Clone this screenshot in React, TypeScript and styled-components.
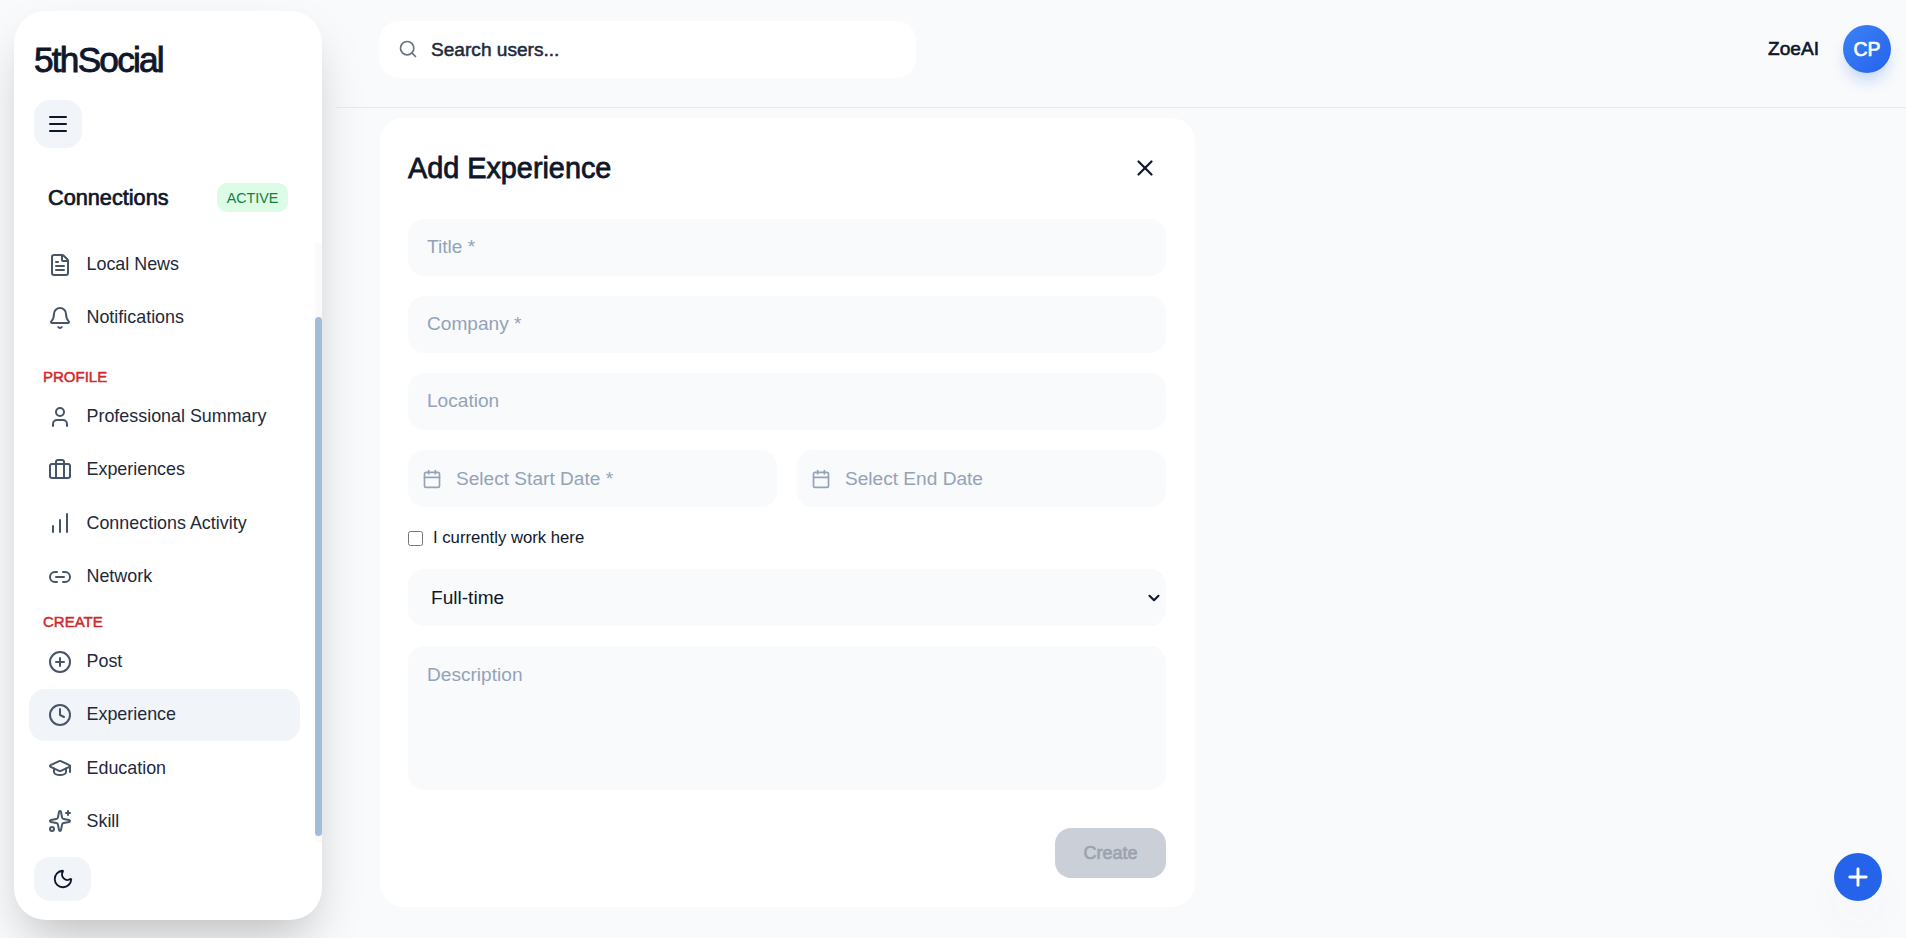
import * as React from 'react';
import styled, { createGlobalStyle } from 'styled-components';
import {
  Bell,
  Briefcase,
  Calendar,
  ChartNoAxesColumnIncreasing,
  ChevronDown,
  CirclePlus,
  Clock,
  FileText,
  GraduationCap,
  Link2,
  LucideIcon,
  Menu,
  Moon,
  Plus,
  Search,
  Sparkles,
  User,
  X,
} from 'lucide-react';

const GlobalStyle = createGlobalStyle`
  * {
    box-sizing: border-box;
  }
  html, body {
    margin: 0;
    padding: 0;
    height: 100%;
    overflow: hidden;
    background: #f8fafc;
    font-family: "Liberation Sans", Arial, sans-serif;
  }
`;

// the headings are a thickened regular cut, real bold runs too wide
const heavy = (w: number) => `
  font-weight: 400;
  -webkit-text-stroke: ${w}px currentColor;
`;

const Page = styled.div`
  display: flex;
  width: 1906px;
  height: 938px;
  background: #f9fafb;
`;

const SidebarSlot = styled.div`
  flex: 0 0 336px;
  padding: 11px 14px 18px;
`;

const Sidebar = styled.aside`
  display: flex;
  flex-direction: column;
  height: 909px;
  padding-top: 30px;
  background: #fff;
  border-radius: 32px;
  box-shadow: 0 25px 50px -12px rgba(0, 0, 0, 0.25);
  overflow: hidden;
`;

const Brand = styled.div`
  height: 36px;
  padding-left: 20px;
  font-size: 35.2px;
  line-height: 37px;
  ${heavy(0.9)}
  letter-spacing: -0.05em;
  color: #0f172a;
`;

const SquareButton = styled.button`
  display: flex;
  align-items: center;
  justify-content: center;
  width: 48px;
  height: 48px;
  margin: 23px 0 0 20px;
  padding: 0;
  border: none;
  border-radius: 16px;
  background: #f1f5f9;
  color: #0f172a;
`;

const ActivityRow = styled.div`
  display: flex;
  align-items: center;
  justify-content: space-between;
  height: 29px;
  margin: 35px 34px 0 34px;
`;

const ActivityName = styled.span`
  padding-top: 1px;
  font-size: 21.7px;
  ${heavy(0.7)}
  color: #0f172a;
`;

const Badge = styled.span`
  display: flex;
  align-items: center;
  justify-content: center;
  width: 71px;
  height: 29px;
  border-radius: 10px;
  background: #dcfce7;
  color: #15803d;
  font-size: 14.3px;
`;

const NavArea = styled.div`
  flex: 1;
  display: flex;
  min-height: 0;
  margin-top: 26px;
`;

const NavList = styled.nav`
  flex: 1;
  display: flex;
  flex-direction: column;
  gap: 2px;
  padding: 1px 15px 0;
`;

const NavItem = styled.a<{ $active?: boolean }>`
  display: flex;
  align-items: center;
  gap: 14.5px;
  flex: 0 0 51.3px;
  padding-left: 19px;
  border-radius: 16px;
  background: ${(p) => (p.$active ? '#f1f5f9' : 'transparent')};
  color: #1e293b;
  font-size: 17.9px;
  svg {
    flex: none;
    color: #475569;
  }
`;

const SectionLabel = styled.div<{ $top: number }>`
  height: 20px;
  margin: ${(p) => p.$top}px 0 2.4px 14px;
  font-size: 15px;
  line-height: 20px;
  ${heavy(0.5)}
  color: #cf2a2a;
`;

const ScrollTrack = styled.div`
  flex: 0 0 7px;
  margin-top: 5px;
  padding-top: 74px;
  padding-bottom: 6px;
  background: #fafafa;
`;

const ScrollThumb = styled.div`
  height: 100%;
  border-radius: 4px;
  background: #a2bcd9;
`;

const ThemeButton = styled(SquareButton)`
  width: 57px;
  height: 44px;
  margin: 15px 0 19px 20px;
`;

const Main = styled.main`
  flex: 1;
  display: flex;
  flex-direction: column;
  min-width: 0;
`;

const Header = styled.header`
  display: flex;
  align-items: center;
  justify-content: space-between;
  height: 108px;
  padding: 0 15px 9px 43px;
  border-bottom: 1px solid #e2e8f0;
`;

const SearchBox = styled.label`
  display: flex;
  align-items: center;
  gap: 13px;
  width: 537px;
  height: 57px;
  padding-left: 19px;
  border-radius: 20px;
  background: #fff;
  svg {
    flex: none;
    color: #6b7280;
  }
`;

const SearchInput = styled.input`
  flex: 1;
  min-width: 0;
  padding: 2px 0 0;
  border: none;
  outline: none;
  background: transparent;
  font: 400 19.1px "Liberation Sans", Arial, sans-serif;
  -webkit-text-stroke: 0.5px #1e293b;
  color: #1e293b;
  &::placeholder {
    color: #1e293b;
    opacity: 1;
  }
`;

const UserArea = styled.div`
  display: flex;
  align-items: center;
  gap: 24px;
`;

const UserName = styled.span`
  font-size: 19.1px;
  ${heavy(0.6)}
  color: #0f172a;
`;

const Avatar = styled.div`
  display: flex;
  align-items: center;
  justify-content: center;
  width: 48px;
  height: 48px;
  border-radius: 50%;
  background: linear-gradient(135deg, #3b82f6, #2563eb);
  box-shadow: 0 10px 15px -3px rgba(59, 130, 246, 0.3);
  color: #fff;
  font-size: 19.4px;
  ${heavy(0.7)}
`;

const Card = styled.section`
  display: flex;
  flex-direction: column;
  gap: 20px;
  width: 815px;
  margin: 10px 0 0 44px;
  padding: 30px 29px 29px 28px;
  border-radius: 24px;
  background: #fff;
`;

const CardHeader = styled.div`
  display: flex;
  align-items: center;
  justify-content: space-between;
  height: 40px;
  margin-bottom: 11px;
`;

const CardTitle = styled.h2`
  margin: 0;
  font-size: 28.8px;
  ${heavy(0.8)}
  color: #0f172a;
`;

const CloseButton = styled.button`
  display: flex;
  padding: 0;
  margin-right: 8px;
  border: none;
  background: transparent;
  color: #0f172a;
`;

const fieldBase = `
  width: 100%;
  border: none;
  outline: none;
  border-radius: 16px;
  background: #f8fafc;
  font: 19.1px "Liberation Sans", Arial, sans-serif;
  color: #0f172a;
`;

const TextField = styled.input`
  ${fieldBase}
  height: 57px;
  padding: 0 19px 2px;
  &::placeholder {
    color: #94a3b8;
    opacity: 1;
  }
`;

const DateRow = styled.div`
  display: grid;
  grid-template-columns: 1fr 1fr;
  gap: 20px;
`;

const DateField = styled.div`
  display: flex;
  align-items: center;
  gap: 14px;
  height: 57px;
  padding-left: 14px;
  border-radius: 16px;
  background: #f8fafc;
  color: #94a3b8;
  font-size: 19.1px;
`;

const CheckRow = styled.label`
  display: flex;
  align-items: center;
  gap: 10px;
  height: 22px;
  font-size: 16.7px;
  color: #0f172a;
`;

const Check = styled.input`
  width: 15px;
  height: 15px;
  margin: 0;
`;

const SelectWrap = styled.div`
  position: relative;
  height: 57px;
  svg {
    position: absolute;
    top: 20px;
    right: 3px;
    color: #0f172a;
    pointer-events: none;
  }
`;

const SelectField = styled.select`
  ${fieldBase}
  appearance: none;
  height: 57px;
  padding: 0 24px 0 23px;
`;

const AreaField = styled.textarea`
  ${fieldBase}
  display: block;
  height: 144px;
  padding: 18px 19px;
  resize: none;
  &::placeholder {
    color: #94a3b8;
    opacity: 1;
  }
`;

const CardFooter = styled.div`
  display: flex;
  justify-content: flex-end;
  margin-top: 18px;
`;

const CreateButton = styled.button`
  width: 111px;
  height: 50px;
  padding: 0;
  border: none;
  border-radius: 16px;
  background: #cbd0d8;
  color: #9ca3af;
  font: 400 18px "Liberation Sans", Arial, sans-serif;
  -webkit-text-stroke: 0.7px #9ca3af;
`;

const Fab = styled.button`
  position: fixed;
  left: 1834px;
  top: 853px;
  display: flex;
  align-items: center;
  justify-content: center;
  width: 48px;
  height: 48px;
  padding: 0;
  border: none;
  border-radius: 50%;
  background: #2563eb;
  color: #fff;
  box-shadow: 0 25px 50px -12px rgba(37, 99, 235, 0.12);
`;

interface LinkDef {
  label: string;
  icon: LucideIcon;
  active?: boolean;
}

const topLinks: LinkDef[] = [
  { label: 'Local News', icon: FileText },
  { label: 'Notifications', icon: Bell },
];

const profileLinks: LinkDef[] = [
  { label: 'Professional Summary', icon: User },
  { label: 'Experiences', icon: Briefcase },
  { label: 'Connections Activity', icon: ChartNoAxesColumnIncreasing },
  { label: 'Network', icon: Link2 },
];

const createLinks: LinkDef[] = [
  { label: 'Post', icon: CirclePlus },
  { label: 'Experience', icon: Clock, active: true },
  { label: 'Education', icon: GraduationCap },
  { label: 'Skill', icon: Sparkles },
];

const renderLinks = (links: LinkDef[]) =>
  links.map(({ label, icon: Icon, active }) => (
    <NavItem key={label} $active={active}>
      <Icon size={24} />
      {label}
    </NavItem>
  ));

export default function App() {
  return (
    <Page>
      <GlobalStyle />
      <SidebarSlot>
        <Sidebar>
          <Brand>5thSocial</Brand>
          <SquareButton aria-label="Menu">
            <Menu size={24} />
          </SquareButton>
          <ActivityRow>
            <ActivityName>Connections</ActivityName>
            <Badge>ACTIVE</Badge>
          </ActivityRow>
          <NavArea>
            <NavList>
              {renderLinks(topLinks)}
              <SectionLabel $top={21}>PROFILE</SectionLabel>
              {renderLinks(profileLinks)}
              <SectionLabel $top={7.4}>CREATE</SectionLabel>
              {renderLinks(createLinks)}
            </NavList>
            <ScrollTrack>
              <ScrollThumb />
            </ScrollTrack>
          </NavArea>
          <ThemeButton aria-label="Theme">
            <Moon size={22} />
          </ThemeButton>
        </Sidebar>
      </SidebarSlot>
      <Main>
        <Header>
          <SearchBox>
            <Search size={20} />
            <SearchInput placeholder="Search users..." />
          </SearchBox>
          <UserArea>
            <UserName>ZoeAI</UserName>
            <Avatar>CP</Avatar>
          </UserArea>
        </Header>
        <Card>
          <CardHeader>
            <CardTitle>Add Experience</CardTitle>
            <CloseButton aria-label="Close">
              <X size={26} />
            </CloseButton>
          </CardHeader>
          <TextField placeholder="Title *" />
          <TextField placeholder="Company *" />
          <TextField placeholder="Location" />
          <DateRow>
            <DateField>
              <Calendar size={20} />
              Select Start Date *
            </DateField>
            <DateField>
              <Calendar size={20} />
              Select End Date
            </DateField>
          </DateRow>
          <CheckRow>
            <Check type="checkbox" />I currently work here
          </CheckRow>
          <SelectWrap>
            <SelectField defaultValue="Full-time">
              <option>Full-time</option>
              <option>Part-time</option>
              <option>Contract</option>
            </SelectField>
            <ChevronDown size={18} strokeWidth={2.8} />
          </SelectWrap>
          <AreaField placeholder="Description" />
          <CardFooter>
            <CreateButton disabled>Create</CreateButton>
          </CardFooter>
        </Card>
      </Main>
      <Fab aria-label="Add">
        <Plus size={28} strokeWidth={2.5} />
      </Fab>
    </Page>
  );
}
